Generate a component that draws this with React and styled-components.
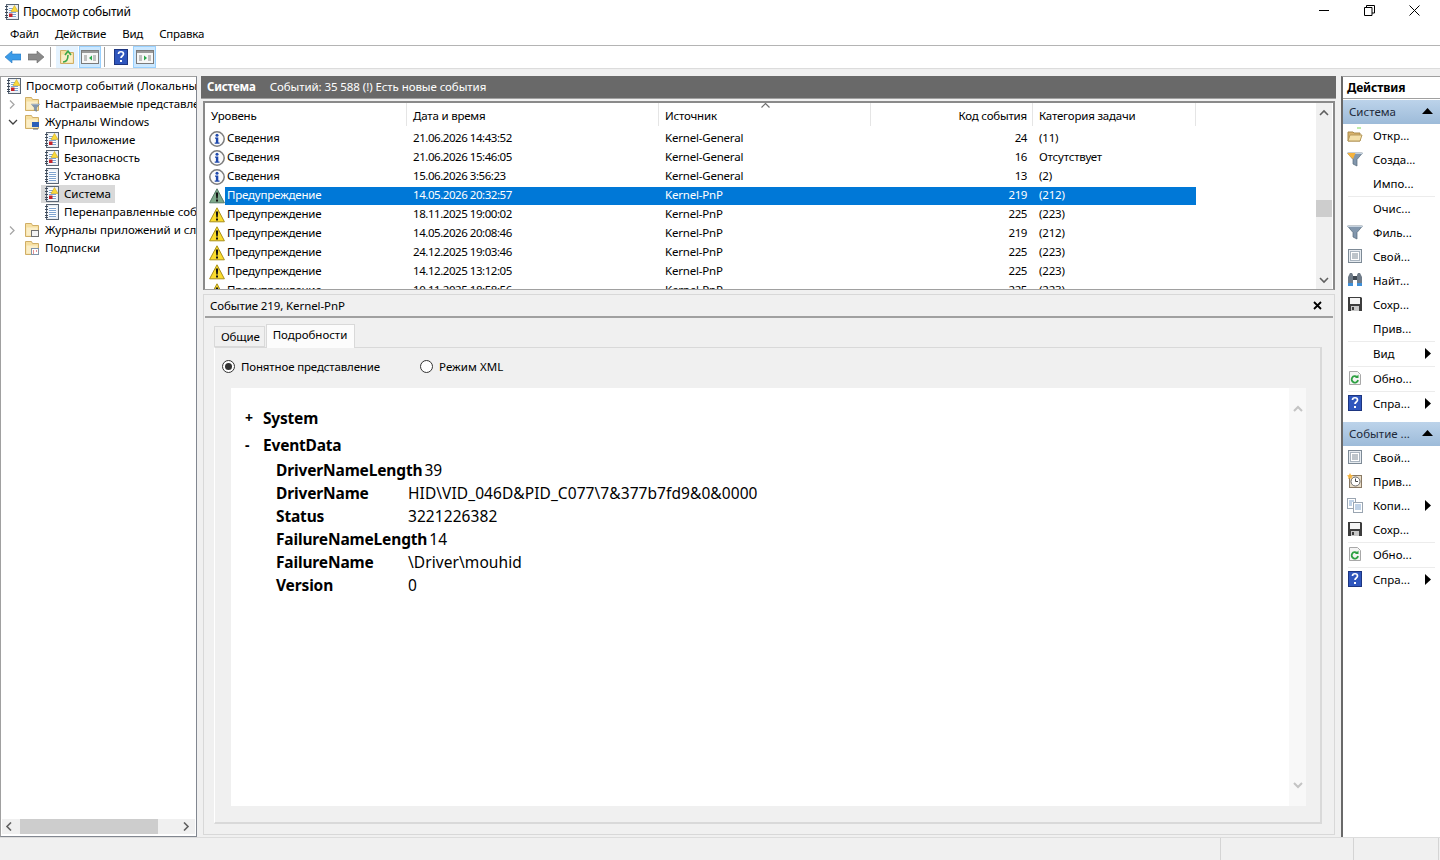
import React from "react";
import styled, { createGlobalStyle } from "styled-components";

const GlobalStyle = createGlobalStyle`
  html, body { margin: 0; padding: 0; background: #f0f0f0; overflow: hidden; }
  body { font-family: "Noto Sans", "Open Sans", sans-serif; font-size: 11.5px; color: #000; }
  * { box-sizing: border-box; }
`;

const Window = styled.div`
  width: 1440px;
  height: 860px;
  display: flex;
  flex-direction: column;
  background: #f0f0f0;
  overflow: hidden;
`;

const TitleBar = styled.div`
  height: 23px;
  flex: none;
  background: #fff;
  display: flex;
  align-items: center;
  padding: 0 3px 0 4px;
`;
const TitleText = styled.div`
  flex: 1;
  margin-left: 3px;
  font-size: 12px;
  letter-spacing: -0.2px;
  line-height: 23px;
`;
const WinButton = styled.div`
  width: 45px;
  height: 23px;
  padding-bottom: 2px;
  display: flex;
  align-items: center;
  justify-content: center;
`;
const MenuBar = styled.div`
  height: 23px;
  flex: none;
  background: #fff;
  display: flex;
  align-items: center;
  padding: 0 0 2px 10px;
  gap: 16px;
  border-bottom: 1px solid #b4b4b4;
  letter-spacing: -0.2px;
`;
const ToolBar = styled.div`
  height: 23px;
  flex: none;
  background: #fff;
  border-bottom: 1px solid #dcdcdc;
  display: flex;
  align-items: center;
  padding-left: 4px;
`;
const ToolButton = styled.div`
  width: ${p => p.$w || 22}px;
  height: 22px;
  margin-left: ${p => p.$ml || 0}px;
  display: flex;
  align-items: center;
  justify-content: center;
  background: ${p => (p.$on ? "#cce8ff" : p.$soft ? "#e5f3ff" : "transparent")};
  border: 1px solid ${p => (p.$on ? "#99d1ff" : "transparent")};
`;
const ToolSep = styled.div`
  width: 1px;
  height: 20px;
  background: #a0a0a0;
  margin-left: ${p => p.$ml || 0}px;
`;

const Main = styled.div`
  height: 768px;
  flex: none;
  padding: 7px 0 0 0;
  display: flex;
  align-items: stretch;
`;

const TreePanel = styled.div`
  width: 197px;
  flex: none;
  height: 761px;
  background: #fff;
  border: 1px solid #828790;
  border-top-color: #a0a0a0;
  border-left-color: #a0a0a0;
  display: flex;
  flex-direction: column;
  margin-right: 4px;
`;
const TreeBody = styled.div`
  flex: 1;
  overflow: hidden;
`;
const TreeRow = styled.div`
  height: 18px;
  display: flex;
  align-items: center;
  white-space: nowrap;
  padding-left: ${p => p.$indent}px;
`;
const TreeArrow = styled.div`
  width: 14px;
  flex: none;
  margin-left: 5px;
  margin-right: 4px;
  display: flex;
  justify-content: center;
`;
const TreeIcon = styled.div`
  width: 16px;
  height: 16px;
  flex: none;
`;
const TreeLabel = styled.div`
  line-height: 18px;
  padding: 0 4px 0 ${p => p.$gap || 4}px;
  letter-spacing: ${p => p.$ls || 0}px;
`;
const TreeSelected = styled.div`
  display: flex;
  align-items: center;
  height: 18px;
  background: ${p => (p.$on ? "#d9d9d9" : "transparent")};
  padding-left: 3px;
`;
const HScroll = styled.div`
  height: 15px;
  margin: 0 1px 2px;
  background: #f0f0f0;
  display: flex;
  align-items: center;
  flex: none;
`;
const HThumb = styled.div`
  width: 138px;
  height: 15px;
  background: #cdcdcd;
  margin-left: 2px;
`;
const ScrollEnd = styled.div`
  width: 16px;
  flex: none;
  display: flex;
  justify-content: center;
  margin-left: ${p => (p.$right ? "auto" : 0)};
`;

const Center = styled.div`
  width: 1136px;
  flex: none;
  height: 761px;
  display: flex;
  flex-direction: column;
  margin-right: 4px;
`;
const CenterHead = styled.div`
  height: 23px;
  flex: none;
  margin-right: 1px;
  background: #696969;
  color: #fff;
  display: flex;
  align-items: center;
  padding: 0 0 2px 6px;
  letter-spacing: -0.08px;
  border-bottom: 1px solid #a0a0a0;
`;
const HeadTitle = styled.b`
  font-weight: 700;
  margin-right: 14px;
  letter-spacing: -0.2px;
`;
const ListPanel = styled.div`
  height: 189px;
  flex: none;
  margin: 2px 2px 0;
  background: #fff;
  border: 2px solid #8a8a8a;
  border-bottom: 1px solid #a0a0a0;
  display: flex;
  overflow: hidden;
`;
const ListBody = styled.div`
  flex: 1;
  min-width: 0;
  overflow: hidden;
`;
const ListHead = styled.div`
  height: 26px;
  display: flex;
  letter-spacing: -0.2px;
`;
const HeadCell = styled.div`
  width: ${p => p.$w}px;
  flex: none;
  height: 23px;
  padding: ${p => (p.$right ? "3px 5px 0 6px" : "3px 6px 0")};
  line-height: 20px;
  text-align: ${p => (p.$right ? "right" : "left")};
  border-right: 1px solid #e5e5e5;
  position: relative;
`;
const SortMark = styled.svg`
  position: absolute;
  right: 100px;
  top: 0;
`;
const Row = styled.div`
  height: 19px;
  display: flex;
  align-items: center;
  letter-spacing: -0.2px;
`;
const RowIcon = styled.div`
  width: 20px;
  flex: none;
  padding-left: 4px;
  height: 16px;
`;
const RowBody = styled.div`
  display: grid;
  grid-template-columns: 182px 252px 212px 162px 163px;
  height: 18px;
  align-items: center;
  color: ${p => (p.$on ? "#fff" : "#000")};
  background: ${p => (p.$on ? "#0078d7" : "transparent")};
`;
const Cell = styled.div`
  padding: 0 ${p => (p.$right ? 6 : 0)}px 2px ${p => p.$pl ?? 6}px;
  text-align: ${p => (p.$right ? "right" : "left")};
  letter-spacing: ${p => (p.$tight ? "-0.45px" : "inherit")};
  white-space: nowrap;
`;
const VScroll = styled.div`
  width: 16px;
  flex: none;
  margin-right: 1px;
  background: #f0f0f0;
  display: flex;
  flex-direction: column;
  align-items: center;
`;
const VThumb = styled.div`
  width: 16px;
  height: 17px;
  background: #cdcdcd;
  margin-top: 77px;
`;
const ScrollCap = styled.div`
  height: ${p => (p.$bottom ? 17 : 20)}px;
  flex: none;
  display: flex;
  align-items: center;
  justify-content: center;
  margin-top: ${p => (p.$bottom ? "auto" : 0)};
`;

const DetailPanel = styled.div`
  flex: 1;
  margin: 4px 2px 2px;
  background: #f0f0f0;
  border: 1px solid #d8d8d8;
  display: flex;
  flex-direction: column;
  min-height: 0;
`;
const DetailHead = styled.div`
  height: 23px;
  flex: none;
  margin: 0 1px;
  background: #f0f0f0;
  border-bottom: 2px solid #a0a0a0;
  display: flex;
  align-items: center;
  justify-content: space-between;
  padding: 0 11px 0 5px;
  letter-spacing: -0.1px;
`;
const TabStrip = styled.div`
  height: 29px;
  flex: none;
  display: flex;
  align-items: flex-end;
  padding-left: 10px;
`;
const Tab = styled.div`
  height: ${p => (p.$on ? 24 : 21)}px;
  padding: ${p => (p.$on ? "0 7px 4px 6px" : "0 4px 0 6px")};
  margin-bottom: ${p => (p.$on ? -1 : 0)}px;
  margin-left: ${p => (p.$on ? 1 : 0)}px;
  border: 1px solid #d9d9d9;
  border-bottom: ${p => (p.$on ? "none" : "1px solid #d9d9d9")};
  background: ${p => (p.$on ? "#fcfcfc" : "#f0f0f0")};
  letter-spacing: ${p => (p.$on ? "-0.02px" : "-0.15px")};
  display: flex;
  align-items: center;
  position: relative;
  z-index: ${p => (p.$on ? 1 : 0)};
`;
const TabPane = styled.div`
  flex: 1;
  margin: 0 12px 10px 10px;
  border-style: solid;
  border-width: 1px 2px 2px 1px;
  border-color: #d9d9d9;
  border-left-color: #fff;
  background: #f0f0f0;
  display: flex;
  flex-direction: column;
  min-height: 0;
  padding: 0 14px 16px 16px;
`;
const RadioRow = styled.div`
  height: 40px;
  flex: none;
  padding-bottom: 4px;
  display: flex;
  align-items: center;
  margin-left: -9px;
`;
const RadioItem = styled.div`
  display: flex;
  align-items: center;
  gap: 6px;
  width: ${p => p.$w}px;
  letter-spacing: ${p => (p.$w ? "-0.15px" : "0.05px")};
`;
const Radio = styled.div`
  width: 13px;
  height: 13px;
  border-radius: 50%;
  border: 1px solid #333;
  background: #fff;
  display: flex;
  align-items: center;
  justify-content: center;
`;
const RadioDot = styled.div`
  width: 7px;
  height: 7px;
  border-radius: 50%;
  background: #333;
`;
const XmlBox = styled.div`
  flex: 1;
  background: #fff;
  display: flex;
  min-height: 0;
`;
const XmlBody = styled.div`
  flex: 1;
  padding: 16px 0 0 14px;
  font-size: 15.5px;
`;
const XmlHead = styled.div`
  display: flex;
  align-items: center;
  height: 27px;
  font-weight: 700;
  letter-spacing: -0.2px;
`;
const XmlToggle = styled.div`
  width: 18px;
  flex: none;
  font-weight: 700;
  font-size: 14px;
`;
const XmlRows = styled.div`
  padding-left: 31px;
`;
const XmlRow = styled.div`
  display: flex;
  align-items: center;
  height: 23px;
  white-space: nowrap;
`;
const XmlKey = styled.div`
  min-width: 130px;
  font-weight: 700;
  margin-right: 2px;
  letter-spacing: -0.15px;
`;
const XmlValue = styled.div`
  letter-spacing: 0.07px;
`;
const XmlScroll = styled.div`
  width: 17px;
  flex: none;
  background: #f8f8f8;
  display: flex;
  flex-direction: column;
  align-items: center;
  padding: 17px 0 16px;
  justify-content: space-between;
`;

const Actions = styled.div`
  flex: 1;
  height: 761px;
  background: #fff;
  border-left: 2px solid #696969;
  border-top: 1px solid #a0a0a0;
  display: flex;
  flex-direction: column;
  min-width: 0;
`;
const ActionsTitle = styled.div`
  height: 22px;
  flex: none;
  font-weight: 700;
  padding: 1px 0 0 4px;
  line-height: 20px;
  font-size: 12px;
  letter-spacing: -0.1px;
  border-bottom: 1px solid #a0a0a0;
  margin-bottom: 1px;
`;
const SectionHead = styled.div`
  height: 24px;
  flex: none;
  display: flex;
  align-items: center;
  justify-content: space-between;
  padding: 0 7px 2px 6px;
  background: linear-gradient(#bcd3ea, #9dbbd9);
  color: #1e2a3a;
  margin-top: ${p => p.$mt || 0}px;
`;
const ActionItem = styled.div`
  height: 24px;
  flex: none;
  padding-bottom: 2px;
  display: flex;
  align-items: center;
`;
const ActionIcon = styled.div`
  width: 16px;
  height: 16px;
  flex: none;
  margin: 0 10px 0 4px;
`;
const ActionText = styled.div`
  flex: 1;
`;
const ActionArrow = styled.div`
  width: 6px;
  margin-right: 9px;
  flex: none;
  display: flex;
`;
const ActionSep = styled.div`
  height: 1px;
  margin: 0 5px;
  background: #ececec;
  flex: none;
`;

const StatusBar = styled.div`
  flex: 1;
  display: flex;
  justify-content: flex-end;
  border-top: 1px solid #dcdcdc;
  padding-right: 1px;
`;
const StatusCell = styled.div`
  width: ${p => p.$w}px;
  border-left: 1px solid #d4d4d4;
  border-right: ${p => (p.$last ? "1px solid #d4d4d4" : "none")};
`;

/* icons */
const Svg = ({ s = 16, w, h, children }) => (
  <svg width={w || s} height={h || s} viewBox={`0 0 ${w || s} ${h || s}`} style={{ display: "block" }}>
    {children}
  </svg>
);

const LogBook = ({ warn }) => (
  <Svg>
    <rect x="2.5" y="0.5" width="12" height="15" fill="#e8edf3" stroke="#5a6675" />
    <rect x="4.5" y="2.5" width="8" height="11" fill="#fff" />
    <path d="M1 2.500h3M1 5.500h3M1 8.500h3M1 11.500h3M1 13.500h3" stroke="#3e4a5a" />
    <path d="M5 4.500h7M5 6.500h7M5 8.500h7M5 10.500h7M5 12.500h7" stroke="#7fa4d0" />
    {warn && <path d="M10.500 1.500l3.500 6H7z" fill="#f9d93a" stroke="#c9a420" strokeWidth=".6" />}
    {warn && <rect x="5" y="9.500" width="3.500" height="3.500" fill="#c8242b" />}
  </Svg>
);

const Folder = ({ children }) => (
  <Svg>
    <path d="M1.500 1.500h6l1 2h6v11h-13z" fill="#f6dfa0" stroke="#d0ae66" />
    <path d="M2.500 5.500h11v8h-11z" fill="#fbeec8" />
    {children}
  </Svg>
);

const FunnelGlyph = () => (
  <>
    <path d="M.5 2h15L10 8.500V15l-4-2V8.500z" fill="#8297ad" stroke="#56687a" strokeWidth=".7" />
    <path d="M.5 2h15v1H.5z" fill="#c5d2de" />
  </>
);

const InfoIcon = () => (
  <Svg>
    <circle cx="8" cy="8" r="7.200" fill="#fbfbfb" stroke="#7d7d7d" strokeWidth="1.500" />
    <circle cx="8" cy="4.200" r="1.500" fill="#1f49ad" />
    <path d="M6 6.500h3.300v5h1.200v1.300H5.700v-1.300h1.200V7.800H6z" fill="#1f49ad" />
  </Svg>
);
const WarnIcon = ({ on }) => (
  <Svg>
    <path d="M8 .8l7.400 14H.6z" fill={on ? "#7ea98a" : "#fbdc2e"} stroke={on ? "#557a66" : "#a98f1a"} strokeLinejoin="round" />
    <path d="M6.800 4.500h2.400L8.700 10.500H7.300z" fill="#111" />
    <rect x="7" y="11.500" width="2" height="2" fill="#111" />
  </Svg>
);
const Chevron = ({ dir, c = "#606060", w = 1.6 }) => {
  const d = {
    up: "M1 6l4-4 4 4",
    down: "M1 2l4 4 4-4",
    left: "M6 0.5L2 4.5l4 4",
    right: "M2 0.5l4 4-4 4",
  }[dir];
  return (
    <Svg w={10} h={9}>
      <path d={d} fill="none" stroke={c} strokeWidth={w} />
    </Svg>
  );
};
const Tri = ({ up }) =>
  up ? (
    <Svg w={11} h={6}>
      <path d="M5.500 0L11 6H0z" fill="#000" />
    </Svg>
  ) : (
    <Svg w={6} h={11}>
      <path d="M0 0l6 5.500L0 11z" fill="#000" />
    </Svg>
  );

const HelpIcon = () => (
  <Svg>
    <rect x="1.500" y="0.500" width="13" height="15" fill="#2f56bd" stroke="#1d3580" />
    <path d="M5.500 5c0-3 5-3 5 0 0 2-2.500 2-2.500 4" fill="none" stroke="#fff" strokeWidth="1.700" />
    <rect x="7" y="11" width="2" height="2" fill="#fff" />
  </Svg>
);
const PanelIcon = ({ right }) => (
  <Svg w={18}>
    <rect x="0.500" y="1.500" width="17" height="13" fill="#f7f7f7" stroke="#7a7a7a" />
    <rect x="1" y="2" width="16" height="2" fill="#9a9a9a" />
    <path d="M3 7h3M3 9h3M3 11h3M12 7h3M12 9h3M12 11h3" stroke="#8a8a8a" />
    <path d={right ? "M8 6.500l3 2.500-3 2.500z" : "M11 6.500l-3 2.500 3 2.500z"} fill="#2aa84b" />
  </Svg>
);
const ActionGlyphs = {
  open: (
    <Svg>
      <path d="M1 5h5l1 1h6v8H1z" fill="#d8b26a" stroke="#a98a4c" />
      <path d="M1 14l2-6h12l-2 6z" fill="#f3dfa8" stroke="#b79a5c" />
      <path d="M10 1h4" stroke="#7ed957" />
    </Svg>
  ),
  filterNew: (
    <Svg>
      <FunnelGlyph />
      <path d="M.5 2h8L6 8 2.500 5z" fill="#f6b33c" />
    </Svg>
  ),
  filter: (
    <Svg>
      <FunnelGlyph />
    </Svg>
  ),
  view: (
    <Svg>
      <rect x="1.500" y="1.500" width="13" height="13" fill="#e6ebf0" stroke="#7d8a96" />
      <rect x="3.500" y="3.500" width="9" height="9" fill="#fff" stroke="#a9b4bf" />
      <path d="M5 6h6M5 8h6M5 10h6" stroke="#7d8a96" />
    </Svg>
  ),
  find: (
    <Svg>
      <path d="M2 3l1-2h2l1 2v8H1V5z" fill="#6f7b88" />
      <path d="M14 3l-1-2h-2l-1 2v8h5V5z" fill="#6f7b88" />
      <rect x="6" y="4" width="4" height="4" fill="#3f4852" />
      <rect x="1" y="11" width="5" height="3" fill="#3f8fd8" />
      <rect x="10" y="11" width="5" height="3" fill="#3f8fd8" />
    </Svg>
  ),
  save: (
    <Svg>
      <path d="M1 1h13l1 1v13H1z" fill="#3d3d3d" />
      <rect x="3" y="2" width="10" height="6" fill="#f4f4f4" />
      <rect x="4" y="10" width="8" height="5" fill="#c8c8c8" />
      <rect x="5" y="11" width="2" height="3" fill="#3d3d3d" />
    </Svg>
  ),
  refresh: (
    <Svg>
      <path d="M2.500 1.500h8l3 3v10h-11z" fill="#f4f4f4" stroke="#a8a8a8" />
      <path d="M11 10a3.200 3.200 0 1 1-1-3" fill="none" stroke="#2ea043" strokeWidth="1.800" />
      <path d="M11.500 4.500v3.500H8z" fill="#2ea043" />
    </Svg>
  ),
  help: <HelpIcon />,
  attach: (
    <Svg>
      <rect x="2.500" y="2.500" width="12" height="12" fill="#e8dcc8" stroke="#8a7a64" />
      <circle cx="8.500" cy="8.500" r="4.500" fill="#fff" stroke="#6a6a6a" />
      <path d="M8.500 5.500v3h2.500" stroke="#444" fill="none" />
      <path d="M3 0l1 2 2 .5-1.500 1.500.5 2L3 5 1 6l.5-2L0 2.500 2 2z" fill="#f6b33c" />
    </Svg>
  ),
  copy: (
    <Svg>
      <rect x="0.500" y="1.500" width="8" height="10" fill="#fff" stroke="#9aa5b1" />
      <rect x="6.500" y="5.500" width="9" height="10" fill="#fff" stroke="#9aa5b1" />
      <path d="M2 4h5M2 6h3M2 8h3M8 8h6M8 10h6M8 12h6" stroke="#7fa3cc" />
    </Svg>
  ),
};

const rows = [
  ["i", "Сведения", "21.06.2026 14:43:52", "Kernel-General", "24", "(11)"],
  ["i", "Сведения", "21.06.2026 15:46:05", "Kernel-General", "16", "Отсутствует"],
  ["i", "Сведения", "15.06.2026 3:56:23", "Kernel-General", "13", "(2)"],
  ["w", "Предупреждение", "14.05.2026 20:32:57", "Kernel-PnP", "219", "(212)", true],
  ["w", "Предупреждение", "18.11.2025 19:00:02", "Kernel-PnP", "225", "(223)"],
  ["w", "Предупреждение", "14.05.2026 20:08:46", "Kernel-PnP", "219", "(212)"],
  ["w", "Предупреждение", "24.12.2025 19:03:46", "Kernel-PnP", "225", "(223)"],
  ["w", "Предупреждение", "14.12.2025 13:12:05", "Kernel-PnP", "225", "(223)"],
  ["w", "Предупреждение", "10.11.2025 18:58:56", "Kernel-PnP", "225", "(223)"],
];

const xmlRows = [
  ["DriverNameLength", "39"],
  ["DriverName", "HID\\VID_046D&PID_C077\\7&377b7fd9&0&0000"],
  ["Status", "3221226382"],
  ["FailureNameLength", "14"],
  ["FailureName", "\\Driver\\mouhid"],
  ["Version", "0"],
];

const systemActions = [
  { t: "Откр...", i: "open" },
  { t: "Созда...", i: "filterNew" },
  { t: "Импо..." },
  { sep: true },
  { t: "Очис..." },
  { t: "Филь...", i: "filter" },
  { t: "Свой...", i: "view" },
  { t: "Найт...", i: "find" },
  { t: "Сохр...", i: "save" },
  { t: "Прив..." },
  { sep: true },
  { t: "Вид", a: true },
  { sep: true },
  { t: "Обно...", i: "refresh" },
  { sep: true },
  { t: "Спра...", i: "help", a: true },
];
const eventActions = [
  { t: "Свой...", i: "view" },
  { t: "Прив...", i: "attach" },
  { t: "Копи...", i: "copy", a: true },
  { t: "Сохр...", i: "save" },
  { sep: true },
  { t: "Обно...", i: "refresh" },
  { sep: true },
  { t: "Спра...", i: "help", a: true },
];

const ActionList = ({ items }) =>
  items.map((item, n) =>
    item.sep ? (
      <ActionSep key={n} />
    ) : (
      <ActionItem key={n}>
        <ActionIcon>{item.i && ActionGlyphs[item.i]}</ActionIcon>
        <ActionText>{item.t}</ActionText>
        {item.a && (
          <ActionArrow>
            <Tri />
          </ActionArrow>
        )}
      </ActionItem>
    )
  );

export default function App() {
  return (
    <Window>
      <GlobalStyle />
      <TitleBar>
        <LogBook warn />
        <TitleText>Просмотр событий</TitleText>
        <WinButton>
          <Svg w={11} h={11}>
            <path d="M0 5.500h10" stroke="#000" />
          </Svg>
        </WinButton>
        <WinButton>
          <Svg w={11} h={11}>
            <path d="M.5 2.500h7.500v8H.5zM2.500 2.500V.5h8v7.500H8" fill="none" stroke="#000" />
          </Svg>
        </WinButton>
        <WinButton>
          <Svg w={11} h={11}>
            <path d="M.5.5l10 10M10.500.5l-10 10" stroke="#000" />
          </Svg>
        </WinButton>
      </TitleBar>
      <MenuBar>
        <span>Файл</span>
        <span>Действие</span>
        <span>Вид</span>
        <span>Справка</span>
      </MenuBar>
      <ToolBar>
        <ToolButton $w={18}>
          <Svg w={16} h={14}>
            <path d="M0 7l7-6v3h9v6H7v3z" fill="#3b9be8" stroke="#2a78c0" strokeWidth=".6" />
          </Svg>
        </ToolButton>
        <ToolButton $w={18} $ml={5}>
          <Svg w={16} h={14}>
            <path d="M16 7L9 1v3H0v6h9v3z" fill="#8a8a8a" stroke="#6a6a6a" strokeWidth=".6" />
          </Svg>
        </ToolButton>
        <ToolSep $ml={5} />
        <ToolButton $w={22} $ml={5} $soft>
          <Folder>
            <path d="M4 13c4 0 5-3 5-7M6 6l3-4 3 4" fill="none" stroke="#3aa84b" strokeWidth="1.600" />
          </Folder>
        </ToolButton>
        <ToolButton $ml={1} $on>
          <PanelIcon />
        </ToolButton>
        <ToolSep $ml={3} />
        <ToolButton $ml={6} $w={20}>
          <HelpIcon />
        </ToolButton>
        <ToolButton $ml={2} $w={23} $on>
          <PanelIcon right />
        </ToolButton>
      </ToolBar>
      <Main>
        <TreePanel>
          <TreeBody>
            <TreeRow $indent={5}>
              <TreeIcon>
                <LogBook warn />
              </TreeIcon>
              <TreeLabel $ls={0.1}>Просмотр событий (Локальный)</TreeLabel>
            </TreeRow>
            <TreeRow $indent={0}>
              <TreeArrow>
                <Chevron dir="right" c="#a6a6a6" w={1.3} />
              </TreeArrow>
              <TreeIcon>
                <Folder>
                  <g transform="translate(7 7) scale(.56)">
                    <FunnelGlyph />
                  </g>
                </Folder>
              </TreeIcon>
              <TreeLabel $gap={5} $ls={-0.1}>
                Настраиваемые представления
              </TreeLabel>
            </TreeRow>
            <TreeRow $indent={0}>
              <TreeArrow>
                <Chevron dir="down" c="#404040" w={1.3} />
              </TreeArrow>
              <TreeIcon>
                <Folder>
                  <rect x="8" y="8" width="7" height="5" fill="#2b5fb8" />
                  <path d="M9 15h5" stroke="#5a6675" />
                </Folder>
              </TreeIcon>
              <TreeLabel $gap={5}>Журналы Windows</TreeLabel>
            </TreeRow>
            {[
              ["Приложение", true],
              ["Безопасность", true],
              ["Установка", false],
              ["Система", true, true],
              ["Перенаправленные события", false],
            ].map(([name, warn, on]) => (
              <TreeRow $indent={40} key={name}>
                <TreeSelected $on={on}>
                  <TreeIcon>
                    <LogBook warn={warn} />
                  </TreeIcon>
                  <TreeLabel>{name}</TreeLabel>
                </TreeSelected>
              </TreeRow>
            ))}
            <TreeRow $indent={0}>
              <TreeArrow>
                <Chevron dir="right" c="#a6a6a6" w={1.3} />
              </TreeArrow>
              <TreeIcon>
                <Folder>
                  <rect x="7.500" y="8.500" width="7" height="6" fill="#f4f4f4" stroke="#707070" />
                </Folder>
              </TreeIcon>
              <TreeLabel $gap={5}>Журналы приложений и служб</TreeLabel>
            </TreeRow>
            <TreeRow $indent={23}>
              <TreeIcon>
                <Folder>
                  <rect x="7.500" y="8.500" width="7" height="6" fill="#fff" stroke="#7f93a8" />
                  <path d="M9 11h1M12 11h1M9 13h1" stroke="#c8242b" />
                </Folder>
              </TreeIcon>
              <TreeLabel $gap={5}>Подписки</TreeLabel>
            </TreeRow>
          </TreeBody>
          <HScroll>
            <ScrollEnd>
              <Chevron dir="left" />
            </ScrollEnd>
            <HThumb />
            <ScrollEnd $right>
              <Chevron dir="right" />
            </ScrollEnd>
          </HScroll>
        </TreePanel>

        <Center>
          <CenterHead>
            <HeadTitle>Система</HeadTitle>
            <span>Событий: 35 588 (!) Есть новые события</span>
          </CenterHead>
          <ListPanel>
            <ListBody>
              <ListHead>
                <HeadCell $w={202}>Уровень</HeadCell>
                <HeadCell $w={252}>Дата и время</HeadCell>
                <HeadCell $w={212}>
                  Источник
                  <SortMark width="9" height="5" viewBox="0 0 9 5">
                    <path d="M.5 4.500l4-4 4 4" fill="none" stroke="#707070" strokeWidth="1.200" />
                  </SortMark>
                </HeadCell>
                <HeadCell $w={162} $right>
                  Код события
                </HeadCell>
                <HeadCell $w={163}>Категория задачи</HeadCell>
              </ListHead>
              {rows.map((r, n) => (
                <Row key={n}>
                  <RowIcon>{r[0] === "i" ? <InfoIcon /> : <WarnIcon on={r[6]} />}</RowIcon>
                  <RowBody $on={r[6]}>
                    <Cell $pl={2}>{r[1]}</Cell>
                    <Cell $tight>{r[2]}</Cell>
                    <Cell>{r[3]}</Cell>
                    <Cell $right $tight>
                      {r[4]}
                    </Cell>
                    <Cell>{r[5]}</Cell>
                  </RowBody>
                </Row>
              ))}
            </ListBody>
            <VScroll>
              <ScrollCap>
                <Chevron dir="up" />
              </ScrollCap>
              <VThumb />
              <ScrollCap $bottom>
                <Chevron dir="down" />
              </ScrollCap>
            </VScroll>
          </ListPanel>

          <DetailPanel>
            <DetailHead>
              <span>Событие 219, Kernel-PnP</span>
              <Svg w={9} h={9}>
                <path d="M1 1l7 7M8 1L1 8" stroke="#000" strokeWidth="1.800" />
              </Svg>
            </DetailHead>
            <TabStrip>
              <Tab>Общие</Tab>
              <Tab $on>Подробности</Tab>
            </TabStrip>
            <TabPane>
              <RadioRow>
                <RadioItem $w={198}>
                  <Radio>
                    <RadioDot />
                  </Radio>
                  Понятное представление
                </RadioItem>
                <RadioItem>
                  <Radio />
                  Режим XML
                </RadioItem>
              </RadioRow>
              <XmlBox>
                <XmlBody>
                  <XmlHead>
                    <XmlToggle>+</XmlToggle>System
                  </XmlHead>
                  <XmlHead>
                    <XmlToggle>-</XmlToggle>EventData
                  </XmlHead>
                  <XmlRows>
                    {xmlRows.map(([k, v]) => (
                      <XmlRow key={k}>
                        <XmlKey>{k}</XmlKey>
                        <XmlValue>{v}</XmlValue>
                      </XmlRow>
                    ))}
                  </XmlRows>
                </XmlBody>
                <XmlScroll>
                  <Chevron dir="up" c="#c4c4c4" w={2} />
                  <Chevron dir="down" c="#c4c4c4" w={2} />
                </XmlScroll>
              </XmlBox>
            </TabPane>
          </DetailPanel>
        </Center>

        <Actions>
          <ActionsTitle>Действия</ActionsTitle>
          <SectionHead>
            Система <Tri up />
          </SectionHead>
          <ActionList items={systemActions} />
          <SectionHead $mt={6}>
            Событие ... <Tri up />
          </SectionHead>
          <ActionList items={eventActions} />
        </Actions>
      </Main>
      <StatusBar>
        <StatusCell $w={133} />
        <StatusCell $w={86} $last />
      </StatusBar>
    </Window>
  );
}
